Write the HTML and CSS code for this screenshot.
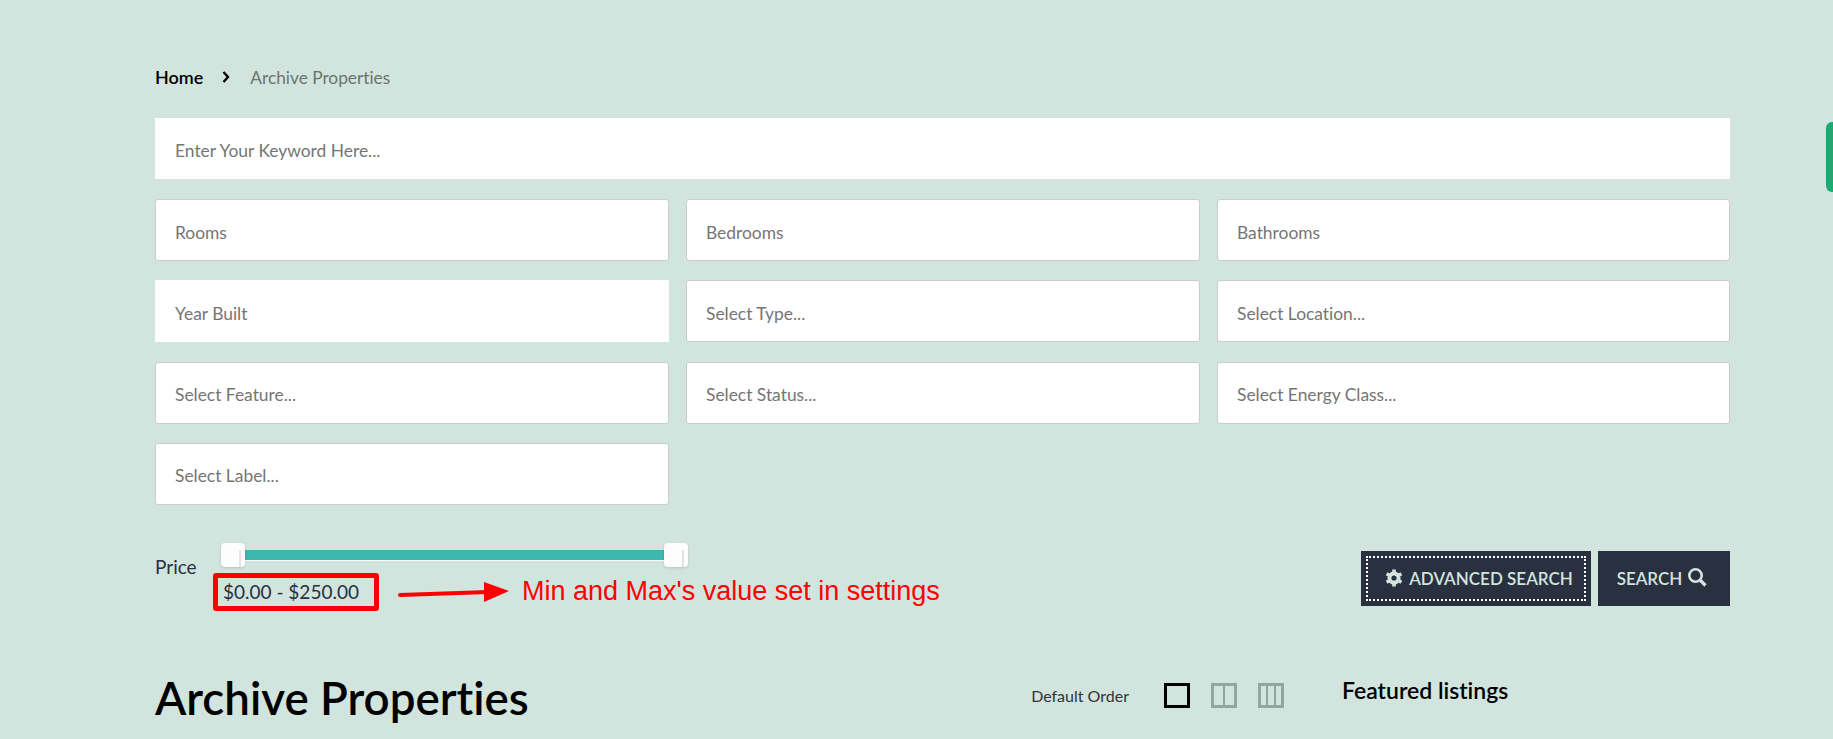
FILE: index.html
```html
<!DOCTYPE html>
<html lang="en">
<head>
  <meta charset="UTF-8">
  <meta name="viewport" content="width=device-width, initial-scale=1.0">
  <title>Archive Properties</title>
  <link rel="stylesheet" href="styles.css">
</head>
<body>
  <div class="side-tab"></div>

  <div class="page">
    <div class="breadcrumb">
      <a href="#" class="crumb-home">Home</a>
      <svg class="crumb-sep" width="8" height="12" viewBox="0 0 8 12"><polyline points="1.5,1 6,6 1.5,11" fill="none" stroke="#000" stroke-width="2.4"/></svg>
      <span class="crumb-current">Archive Properties</span>
    </div>

    <input class="field field-wide field-plain" type="text" placeholder="Enter Your Keyword Here...">

    <div class="field-grid">
      <input class="field" type="text" placeholder="Rooms">
      <input class="field" type="text" placeholder="Bedrooms">
      <input class="field" type="text" placeholder="Bathrooms">
      <input class="field field-plain" type="text" placeholder="Year Built">
      <select class="field"><option>Select Type...</option></select>
      <select class="field"><option>Select Location...</option></select>
      <select class="field"><option>Select Feature...</option></select>
      <select class="field"><option>Select Status...</option></select>
      <select class="field"><option>Select Energy Class...</option></select>
      <select class="field"><option>Select Label...</option></select>
    </div>

    <div class="price-row">
      <div class="price-label">Price</div>
      <div class="price-box">
        <div class="slider">
          <div class="slider-track"></div>
          <span class="slider-handle"></span>
          <span class="slider-handle"></span>
        </div>
        <div class="price-note">
          <div class="price-value">$0.00 - $250.00</div>
          <svg class="note-arrow" width="112" height="22" viewBox="0 0 112 22"><line x1="2" y1="14" x2="90" y2="11" stroke="#f00" stroke-width="4" stroke-linecap="round"/><polygon points="86,1 111,10 86,21" fill="#f00"/></svg>
          <span class="note-text">Min and Max's value set in settings</span>
        </div>
      </div>
      <div class="search-buttons">
        <button class="btn btn-advanced">
          <svg width="18" height="18" viewBox="0 0 18 18"><g fill="none" stroke="#d2e4de"><circle cx="9" cy="9" r="4.6" stroke-width="4"/><path stroke-width="3.6" d="M9 .5V3M9 15v2.5M14.2 6l2.2-1.25M14.2 12l2.2 1.25M3.8 6L1.6 4.75M3.8 12l-2.2 1.25"/></g></svg>
          ADVANCED SEARCH
        </button>
        <button class="btn btn-search">
          SEARCH
          <svg class="search-icon" width="20" height="20" viewBox="0 0 20 20"><g fill="none" stroke="#d2e4de"><circle cx="8.5" cy="8.5" r="6.2" stroke-width="2.6"/><line x1="13" y1="13" x2="18.5" y2="18.5" stroke-width="3.2"/></g></svg>
        </button>
      </div>
    </div>

    <div class="listing-head">
      <div class="listing-main">
        <h1>Archive Properties</h1>
        <div class="listing-tools">
          <span class="order">Default Order</span>
          <div class="view-icon active"><i></i></div>
          <div class="view-icon"><i></i><i></i></div>
          <div class="view-icon"><i></i><i></i><i></i></div>
        </div>
      </div>
      <h3>Featured listings</h3>
    </div>
  </div>
</body>
</html>
```

FILE: styles.css
```css
body {
  font-family: Lato, "Noto Sans", sans-serif;
  font-variant-ligatures: none;
  margin: 0;
  padding: 0;
  background-color: #d2e4de;
  height: 739px;
  overflow: hidden;
}
.side-tab {
  position: absolute;
  top: 122px;
  right: 0;
  width: 7px;
  height: 70px;
  background-color: #1aab73;
  border-radius: 6px 0 0 6px;
}
.page {
  padding: 66px 103px 0 155px;
}
.breadcrumb {
  display: flex;
  align-items: center;
  height: 22px;
  font-size: 17.3px;
}
.crumb-home {
  color: #000;
  font-size: 18px;
  font-weight: 600;
  text-decoration: none;
}
.crumb-sep {
  margin: 0 20px 0 19px;
}
.crumb-current {
  color: #6b7570;
}
.field {
  display: block;
  box-sizing: border-box;
  width: 100%;
  height: 62px;
  padding: 4px 19px 0;
  border: 1px solid #ccc;
  border-radius: 3px;
  background-color: #fff;
  color: #757575;
  font-family: inherit;
  font-size: 17.4px;
  font-variant-ligatures: none;
  appearance: none;
}
.field::placeholder {
  color: #757575;
  opacity: 1;
}
.field-plain {
  padding-left: 20px;
  border: 0;
  border-radius: 0;
}
.field-wide {
  margin-top: 30px;
  height: 61px;
}
.field-grid {
  display: grid;
  grid-template-columns: 514px 514px 513px;
  gap: 19.3px 17px;
  margin-top: 20px;
}
.price-row {
  display: flex;
  margin-top: 38px;
}
.price-label {
  width: 58px;
  margin-top: 12px;
  font-size: 19px;
  line-height: 24px;
  color: #29303f;
}
.slider {
  position: relative;
  width: 467px;
  height: 24px;
  margin-left: 8px;
}
.slider-track {
  position: absolute;
  top: 7px;
  left: 6px;
  right: 6px;
  height: 10px;
  background-color: #3eb8ae;
  border-bottom: 1px solid #fff;
}
.slider-handle {
  position: absolute;
  top: 0;
  left: 0;
  width: 24px;
  height: 24px;
  box-sizing: border-box;
  background-color: #fdfdfd;
  border-radius: 4px;
  box-shadow: 0 1px 3px rgba(0, 0, 0, 0.15);
}
.slider-handle + .slider-handle {
  left: auto;
  right: 0;
}
.slider-handle::after {
  content: "";
  position: absolute;
  top: 7px;
  right: 4px;
  width: 2px;
  height: 17px;
  background-color: #e4e4e4;
}
.price-note {
  display: flex;
  align-items: center;
  margin-top: 6px;
}
.price-value {
  box-sizing: border-box;
  width: 166px;
  height: 38px;
  padding-left: 5px;
  border: 5px solid #f00;
  border-radius: 3px;
  font-size: 19px;
  line-height: 28px;
  color: #29303f;
  white-space: nowrap;
}
.note-arrow {
  margin: 0 12px 0 19px;
}
.note-text {
  font-family: "Liberation Sans", Arial, sans-serif;
  font-size: 27px;
  color: #f00;
  white-space: nowrap;
}
.search-buttons {
  display: flex;
  gap: 7px;
  margin: 8px 0 0 auto;
}
.btn {
  display: flex;
  align-items: center;
  justify-content: center;
  gap: 6px;
  height: 55px;
  border: 0;
  background-color: #29303f;
  color: #d2e4de;
  font-family: inherit;
  font-size: 17px;
  font-weight: 600;
}
.btn-advanced {
  width: 230px;
  padding-left: 12px;
  outline: 2px dotted #fff;
  outline-offset: -7px;
}
.btn-search {
  width: 132px;
  padding-right: 10px;
}
.search-icon {
  margin: -3px 0 0 -1px;
}
.listing-head {
  display: flex;
  margin-top: 53px;
}
.listing-main {
  display: flex;
  align-items: center;
  justify-content: space-between;
  width: 1129px;
  height: 68px;
}
h1 {
  margin: 0;
  font-size: 45.7px;
  font-weight: 600;
  color: #000;
}
.listing-tools {
  display: flex;
  align-items: center;
  gap: 21px;
  margin-top: -4px;
}
.order {
  margin-right: 14px;
  font-size: 16px;
  color: #333;
}
.view-icon {
  display: flex;
  box-sizing: border-box;
  width: 26px;
  height: 25px;
  border: 3px solid #8fa79f;
}
.view-icon.active {
  border-color: #000;
}
.view-icon i {
  flex: 1;
  border-left: 2px solid #8fa79f;
}
.view-icon i:first-child {
  border-left: 0;
}
h3 {
  margin: 0 0 0 58px;
  font-size: 23px;
  font-weight: 600;
  line-height: 52px;
  color: #000;
}
```
